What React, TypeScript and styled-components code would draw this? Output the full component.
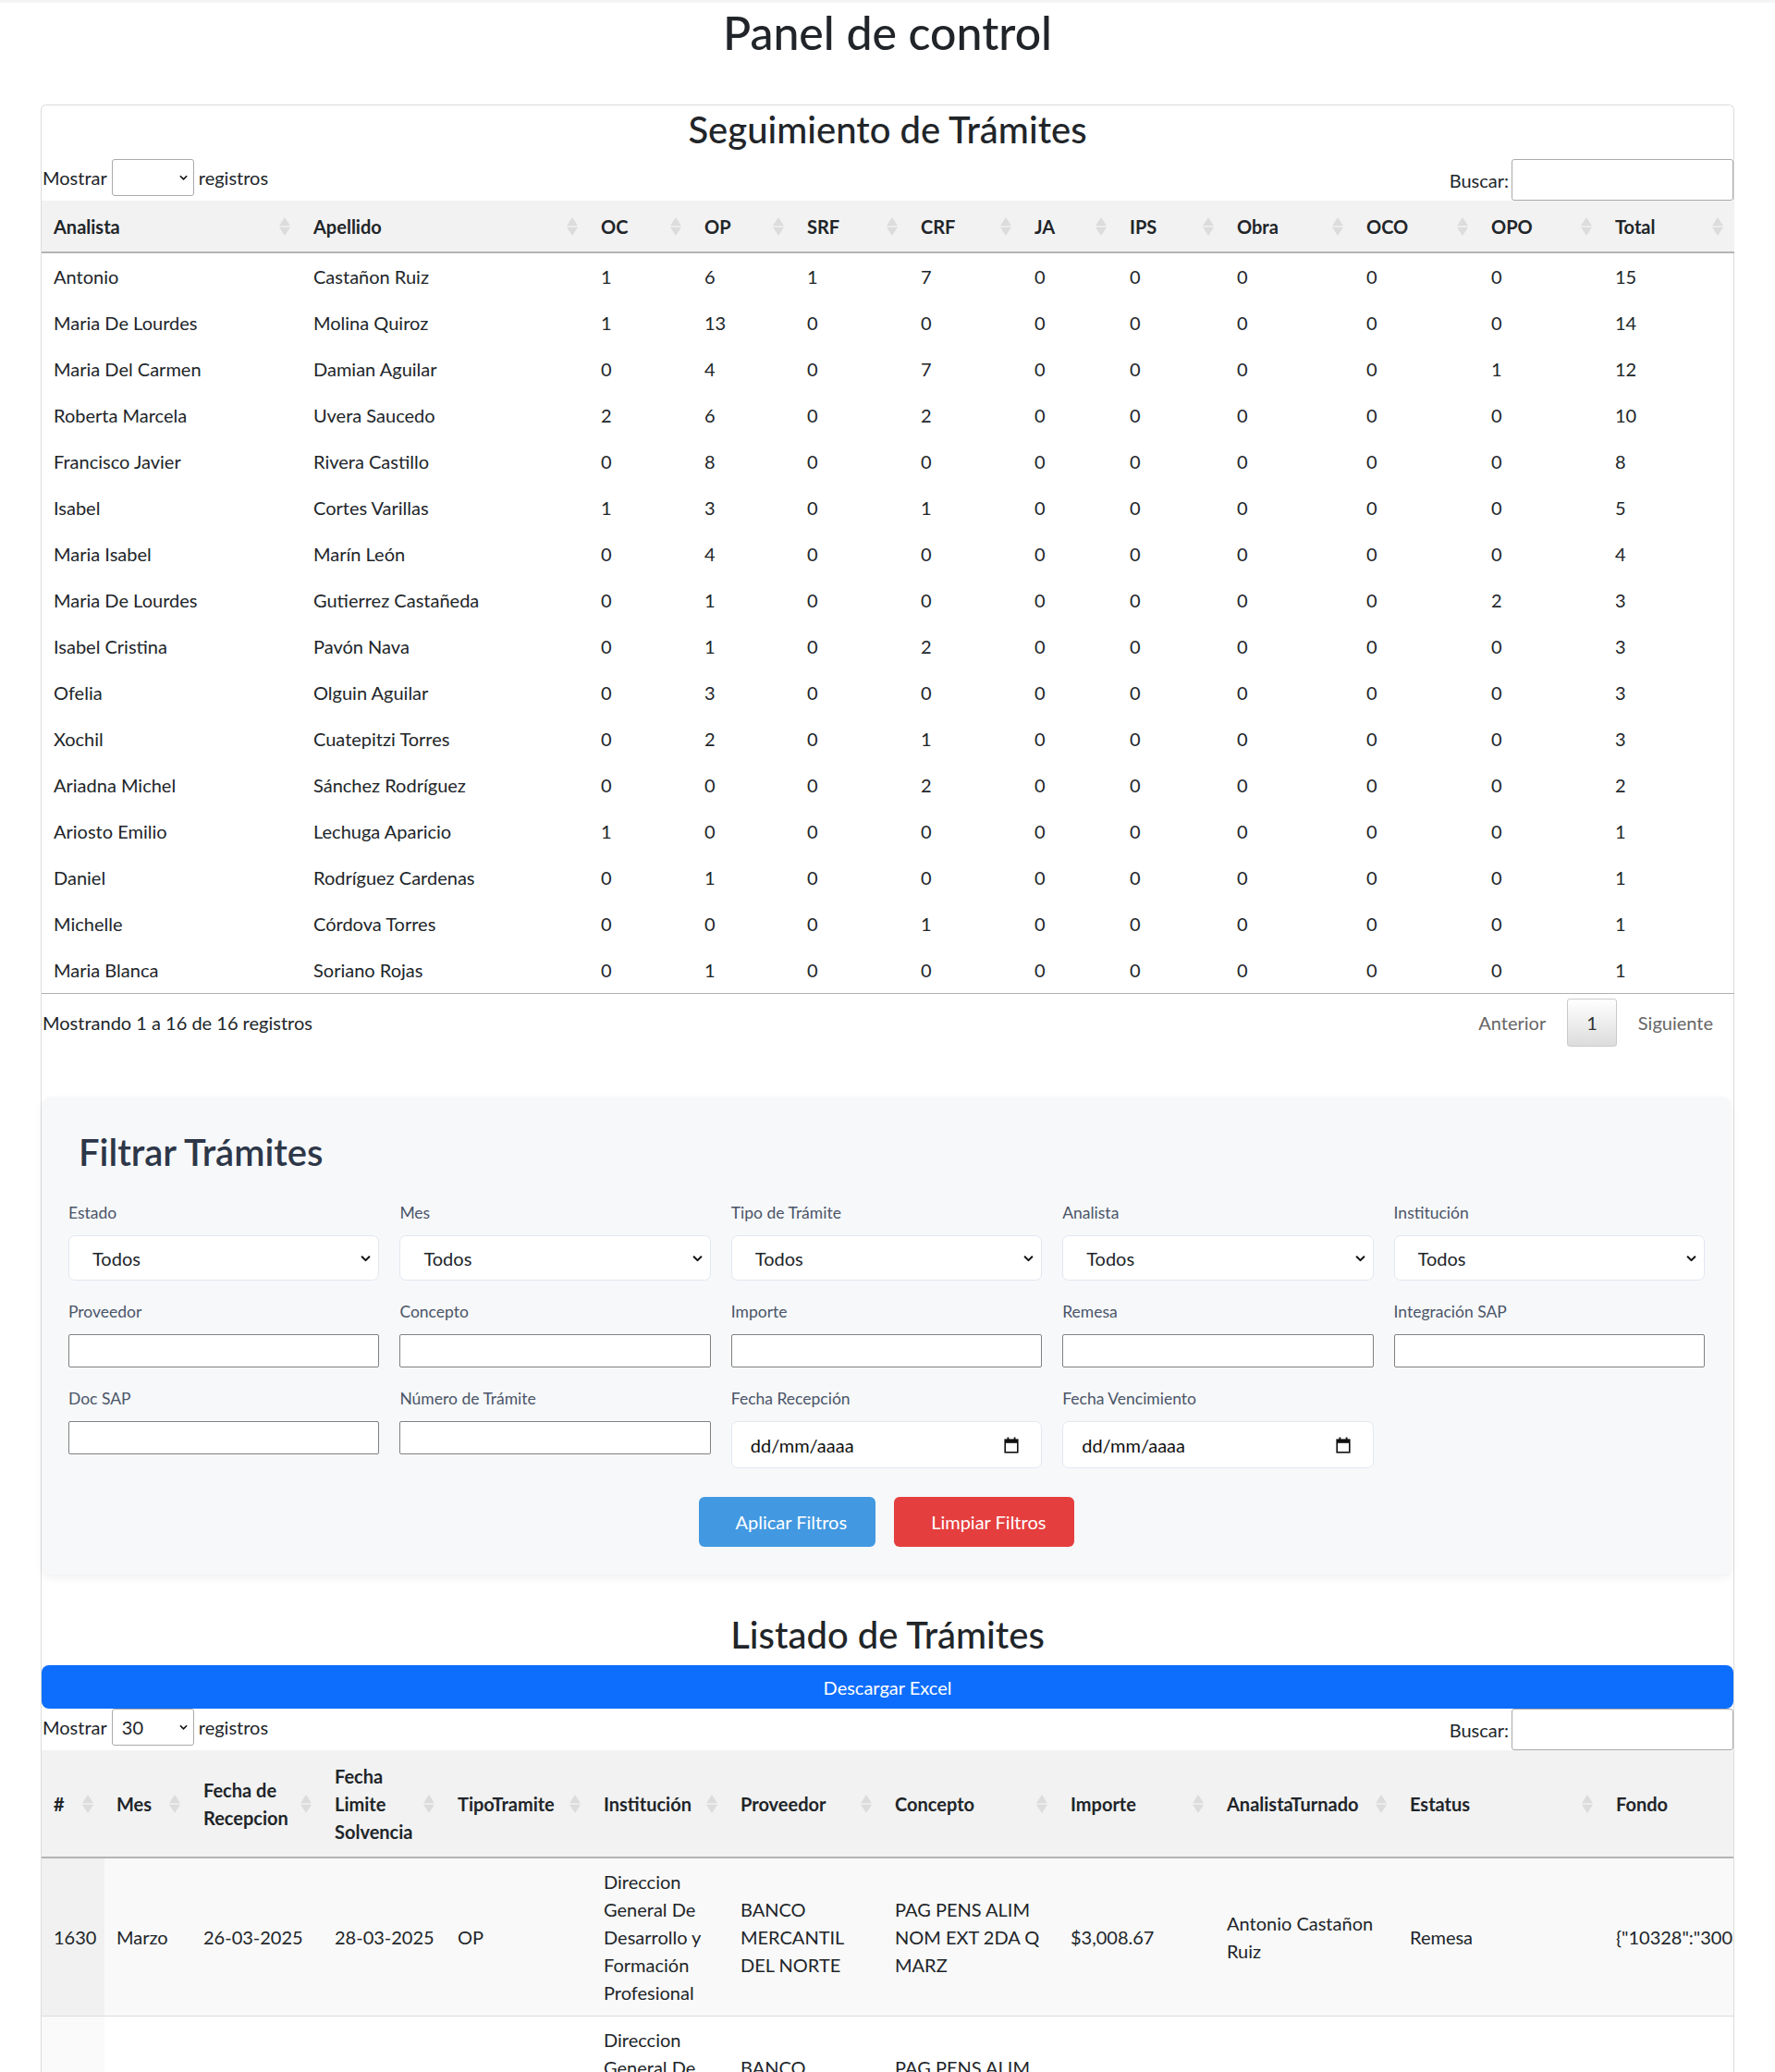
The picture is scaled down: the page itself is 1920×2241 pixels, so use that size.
import React from "react";
import styled, { createGlobalStyle } from "styled-components";

const GlobalStyle = createGlobalStyle`
  html, body { margin: 0; padding: 0; background: #ffffff; }
  body {
    font-family: Lato, "Open Sans", "Noto Sans", sans-serif;
    font-size: 20px;
    line-height: 1.5;
    color: #212529;
  }
  * { box-sizing: border-box; }
`;

const TopStrip = styled.div`
  height: 3px;
  background: #f3f4f6;
`;

const PageTitle = styled.h1`
  margin: 2px 0 48px;
  font-size: 50px;
  line-height: 60px;
  font-weight: 500;
  text-align: center;
`;

const Page = styled.div`
  padding: 0 44px;
`;

const Card = styled.div`
  border: 1px solid #dcdcdc;
  border-radius: 6px;
  border-bottom: none;
  background: #fff;
`;

const SectionTitle = styled.h2<{ $top: number; $bottom: number }>`
  margin: ${(p) => p.$top}px 0 ${(p) => p.$bottom}px;
  font-size: 40px;
  line-height: 48px;
  font-weight: 500;
  text-align: center;
  color: #212529;
`;

const DtTop = styled.div`
  display: flex;
  justify-content: space-between;
  align-items: flex-start;
  height: 45px;
`;

const LengthLabel = styled.label`
  display: flex;
  align-items: center;
  height: 40px;
  padding-left: 1px;
`;

const SelectWrap = styled.span`
  position: relative;
  display: inline-flex;
`;

const LengthSelect = styled.select`
  appearance: none;
  width: 89px;
  height: 40px;
  margin: 0 5px;
  padding: 0 0 0 10px;
  border: 1px solid #aaaaaa;
  border-radius: 3px;
  background: #fff;
  font: inherit;
  color: #212529;
`;

const Chevron = styled.svg<{ $right: number }>`
  position: absolute;
  right: ${(p) => p.$right}px;
  top: 50%;
  transform: translateY(-50%);
  pointer-events: none;
`;

const SearchLabel = styled.label`
  display: flex;
  align-items: center;
  height: 45px;
`;

const SearchInput = styled.input`
  width: 240px;
  height: 45px;
  margin-left: 3px;
  border: 1px solid #aaaaaa;
  border-radius: 3px;
  background: #fff;
  font: inherit;
`;

const DataTable = styled.table`
  width: 100%;
  border-collapse: collapse;
  table-layout: fixed;
  border-bottom: 1px solid #b0b0b0;
`;

const WideTable = styled(DataTable)`
  width: 1950px;
`;

const HeadCell = styled.th`
  background: #f2f2f2;
  padding: 12.5px 12px 12.5px 13px;
  border-bottom: 2px solid #b4b4b4;
  font-weight: 700;
  text-align: left;
  vertical-align: middle;
  white-space: nowrap;
  line-height: 30px;
`;

const HeadInner = styled.div`
  display: flex;
  align-items: center;
  justify-content: space-between;
  gap: 4px;
`;

const Cell = styled.td<{ $bg?: string; $line?: boolean; $nowrap?: boolean }>`
  padding: 10px 13px;
  line-height: 30px;
  vertical-align: middle;
  white-space: ${(p) => (p.$nowrap ? "nowrap" : "normal")};
  overflow: hidden;
  background: ${(p) => p.$bg || "transparent"};
  border-top: ${(p) => (p.$line ? "1px solid #dddddd" : "none")};
`;

const DtBottom = styled.div`
  display: flex;
  justify-content: space-between;
  align-items: flex-start;
  padding-top: 5px;
`;

const Info = styled.div`
  padding: 11px 0 0 1px;
  line-height: 30px;
`;

const Paginate = styled.div`
  display: flex;
  align-items: center;
  padding-right: 1px;
`;

const PageButton = styled.span<{ $current?: boolean }>`
  margin-left: 2px;
  padding: 10px 20px;
  line-height: 30px;
  border: 1px solid ${(p) => (p.$current ? "#cacaca" : "transparent")};
  border-radius: 3px;
  color: ${(p) => (p.$current ? "#333" : "#666")};
  background: ${(p) =>
    p.$current ? "linear-gradient(to bottom, #ffffff 0%, #dcdcdc 100%)" : "transparent"};
`;

const FilterPanel = styled.div`
  margin: 54px 2px 0 0;
  padding: 36px 29px 30px 29px;
  background: #f7f8fa;
  border-radius: 10px;
  box-shadow: 0 4px 10px rgba(0, 0, 0, 0.06);
`;

const FilterTitle = styled.h2`
  margin: 0 0 29px 11px;
  font-size: 40px;
  line-height: 48px;
  font-weight: 600;
  color: #2d3748;
`;

const FilterGrid = styled.div`
  display: grid;
  grid-template-columns: repeat(5, 1fr);
  column-gap: 22px;
  row-gap: 21px;
  align-items: start;
`;

const Field = styled.div`
  display: flex;
  flex-direction: column;
`;

const FieldLabel = styled.label`
  font-size: 17.5px;
  line-height: 26px;
  margin-bottom: 11px;
  color: #4a5568;
`;

const FilterSelect = styled.select`
  appearance: none;
  width: 100%;
  height: 49px;
  padding: 0 25px;
  border: 1px solid #e2e8f0;
  border-radius: 7px;
  background: #fff;
  font: inherit;
  color: #212529;
`;

const TextInput = styled.input`
  width: 100%;
  height: 36px;
  border: 1px solid #808080;
  border-radius: 2px;
  background: #fff;
  font: inherit;
`;

const DateBox = styled.div`
  display: flex;
  align-items: center;
  justify-content: space-between;
  height: 51px;
  padding: 0 24px 0 20px;
  border: 1px solid #e2e8f0;
  border-radius: 7px;
  background: #fff;
  color: #111;
`;

const ButtonRow = styled.div`
  display: flex;
  justify-content: center;
  gap: 20px;
  margin-top: 31px;
`;

const ActionButton = styled.button<{ $color: string }>`
  height: 54px;
  padding: 0 31px 0 40px;
  border: none;
  border-radius: 6px;
  background: ${(p) => p.$color};
  color: #fff;
  font: inherit;
`;

const ExcelBar = styled.button`
  display: block;
  width: 100%;
  height: 47px;
  border: none;
  border-radius: 8px;
  background: #0d6efd;
  color: #fff;
  font: inherit;
`;

const TableScroll = styled.div`
  overflow-x: auto;
`;

const SortIcon = () => (
  <svg width="12" height="20" viewBox="0 0 12 20" style={{ flex: "none" }}>
    <polygon points="6,0 12,9.3 0,9.3" fill="#dcdcdc" />
    <polygon points="0,10.7 12,10.7 6,20" fill="#dcdcdc" />
  </svg>
);

const ChevronIcon = ({ right, w, h }: { right: number; w: number; h: number }) => (
  <Chevron $right={right} width={w} height={h} viewBox="0 0 10 6">
    <path d="M1 1 L5 5 L9 1" fill="none" stroke="#111" strokeWidth="1.8" />
  </Chevron>
);

const CalendarIcon = () => (
  <svg width="16" height="18" viewBox="0 0 16 18">
    <rect x="1.2" y="3.2" width="13.6" height="13.6" fill="none" stroke="#111" strokeWidth="1.6" />
    <rect x="1.2" y="3.2" width="13.6" height="3.6" fill="#111" />
    <rect x="3.5" y="0.5" width="1.8" height="3" fill="#111" />
    <rect x="10.7" y="0.5" width="1.8" height="3" fill="#111" />
  </svg>
);

const t1Cols = [281, 311, 112, 111, 123, 123, 103, 116, 140, 135, 134, 142];
const t1Head = ["Analista", "Apellido", "OC", "OP", "SRF", "CRF", "JA", "IPS", "Obra", "OCO", "OPO", "Total"];
const t1Rows: (string | number)[][] = [
  ["Antonio", "Castañon Ruiz", 1, 6, 1, 7, 0, 0, 0, 0, 0, 15],
  ["Maria De Lourdes", "Molina Quiroz", 1, 13, 0, 0, 0, 0, 0, 0, 0, 14],
  ["Maria Del Carmen", "Damian Aguilar", 0, 4, 0, 7, 0, 0, 0, 0, 1, 12],
  ["Roberta Marcela", "Uvera Saucedo", 2, 6, 0, 2, 0, 0, 0, 0, 0, 10],
  ["Francisco Javier", "Rivera Castillo", 0, 8, 0, 0, 0, 0, 0, 0, 0, 8],
  ["Isabel", "Cortes Varillas", 1, 3, 0, 1, 0, 0, 0, 0, 0, 5],
  ["Maria Isabel", "Marín León", 0, 4, 0, 0, 0, 0, 0, 0, 0, 4],
  ["Maria De Lourdes", "Gutierrez Castañeda", 0, 1, 0, 0, 0, 0, 0, 0, 2, 3],
  ["Isabel Cristina", "Pavón Nava", 0, 1, 0, 2, 0, 0, 0, 0, 0, 3],
  ["Ofelia", "Olguin Aguilar", 0, 3, 0, 0, 0, 0, 0, 0, 0, 3],
  ["Xochil", "Cuatepitzi Torres", 0, 2, 0, 1, 0, 0, 0, 0, 0, 3],
  ["Ariadna Michel", "Sánchez Rodríguez", 0, 0, 0, 2, 0, 0, 0, 0, 0, 2],
  ["Ariosto Emilio", "Lechuga Aparicio", 1, 0, 0, 0, 0, 0, 0, 0, 0, 1],
  ["Daniel", "Rodríguez Cardenas", 0, 1, 0, 0, 0, 0, 0, 0, 0, 1],
  ["Michelle", "Córdova Torres", 0, 0, 0, 1, 0, 0, 0, 0, 0, 1],
  ["Maria Blanca", "Soriano Rojas", 0, 1, 0, 0, 0, 0, 0, 0, 0, 1],
];

const t2Cols = [68, 94, 142, 133, 158, 148, 167, 190, 169, 198, 223, 260];
const t2Nowrap = [true, true, true, true, true, false, false, false, true, false, true, true];
const t2Head: React.ReactNode[] = [
  "#",
  "Mes",
  <>Fecha de<br />Recepcion</>,
  <>Fecha<br />Limite<br />Solvencia</>,
  "TipoTramite",
  "Institución",
  "Proveedor",
  "Concepto",
  "Importe",
  "AnalistaTurnado",
  "Estatus",
  "Fondo",
];
const t2Rows: string[][] = [
  ["1630", "Marzo", "26-03-2025", "28-03-2025", "OP", "Direccion General De Desarrollo y Formación Profesional", "BANCO MERCANTIL DEL NORTE", "PAG PENS ALIM NOM EXT 2DA Q MARZ", "$3,008.67", "Antonio Castañon Ruiz", "Remesa", "{\"10328\":\"3008.67\"}"],
  ["1629", "Marzo", "26-03-2025", "28-03-2025", "OP", "Direccion General De Desarrollo y Formación Profesional", "BANCO MERCANTIL DEL NORTE", "PAG PENS ALIM NOM EXT 1RA Q MARZ", "$3,008.67", "Antonio Castañon Ruiz", "Remesa", "{\"10328\":\"3008.67\"}"],
  ["1628", "Marzo", "25-03-2025", "27-03-2025", "OP", "Direccion General De Desarrollo y Formación Profesional", "BANCO MERCANTIL DEL NORTE", "PAG PENS ALIM NOM EXT 2DA Q FEB", "$2,950.12", "Antonio Castañon Ruiz", "Remesa", "{\"10328\":\"2950.12\"}"],
];

const selectFields = ["Estado", "Mes", "Tipo de Trámite", "Analista", "Institución"];
const textFields = ["Proveedor", "Concepto", "Importe", "Remesa", "Integración SAP"];

export default function App() {
  return (
    <>
      <GlobalStyle />
      <TopStrip />
      <PageTitle>Panel de control</PageTitle>
      <Page>
        <Card>
          <SectionTitle $top={2} $bottom={8}>Seguimiento de Trámites</SectionTitle>
          <DtTop>
            <LengthLabel>
              Mostrar
              <SelectWrap>
                <LengthSelect defaultValue="">
                  <option value=""></option>
                </LengthSelect>
                <ChevronIcon right={12} w={9} h={6} />
              </SelectWrap>
              registros
            </LengthLabel>
            <SearchLabel>
              Buscar:
              <SearchInput type="text" />
            </SearchLabel>
          </DtTop>
          <DataTable>
            <colgroup>
              {t1Cols.map((w, i) => (
                <col key={i} style={{ width: w }} />
              ))}
            </colgroup>
            <thead>
              <tr>
                {t1Head.map((h) => (
                  <HeadCell key={h}>
                    <HeadInner>
                      <span>{h}</span>
                      <SortIcon />
                    </HeadInner>
                  </HeadCell>
                ))}
              </tr>
            </thead>
            <tbody>
              {t1Rows.map((r, i) => (
                <tr key={i}>
                  {r.map((c, j) => (
                    <Cell key={j} $nowrap>{c}</Cell>
                  ))}
                </tr>
              ))}
            </tbody>
          </DataTable>
          <DtBottom>
            <Info>Mostrando 1 a 16 de 16 registros</Info>
            <Paginate>
              <PageButton>Anterior</PageButton>
              <PageButton $current>1</PageButton>
              <PageButton>Siguiente</PageButton>
            </Paginate>
          </DtBottom>

          <FilterPanel>
            <FilterTitle>Filtrar Trámites</FilterTitle>
            <FilterGrid>
              {selectFields.map((f) => (
                <Field key={f}>
                  <FieldLabel>{f}</FieldLabel>
                  <SelectWrap>
                    <FilterSelect defaultValue="Todos">
                      <option>Todos</option>
                    </FilterSelect>
                    <ChevronIcon right={9} w={11} h={7} />
                  </SelectWrap>
                </Field>
              ))}
              {textFields.map((f) => (
                <Field key={f}>
                  <FieldLabel>{f}</FieldLabel>
                  <TextInput type="text" />
                </Field>
              ))}
              <Field>
                <FieldLabel>Doc SAP</FieldLabel>
                <TextInput type="text" />
              </Field>
              <Field>
                <FieldLabel>Número de Trámite</FieldLabel>
                <TextInput type="text" />
              </Field>
              <Field>
                <FieldLabel>Fecha Recepción</FieldLabel>
                <DateBox>
                  <span>dd/mm/aaaa</span>
                  <CalendarIcon />
                </DateBox>
              </Field>
              <Field>
                <FieldLabel>Fecha Vencimiento</FieldLabel>
                <DateBox>
                  <span>dd/mm/aaaa</span>
                  <CalendarIcon />
                </DateBox>
              </Field>
            </FilterGrid>
            <ButtonRow>
              <ActionButton $color="#4299e1">Aplicar Filtros</ActionButton>
              <ActionButton $color="#e53e3e">Limpiar Filtros</ActionButton>
            </ButtonRow>
          </FilterPanel>

          <SectionTitle $top={41} $bottom={9}>Listado de Trámites</SectionTitle>
          <ExcelBar>Descargar Excel</ExcelBar>
          <DtTop>
            <LengthLabel>
              Mostrar
              <SelectWrap>
                <LengthSelect defaultValue="30">
                  <option>10</option>
                  <option>30</option>
                  <option>50</option>
                </LengthSelect>
                <ChevronIcon right={12} w={9} h={6} />
              </SelectWrap>
              registros
            </LengthLabel>
            <SearchLabel>
              Buscar:
              <SearchInput type="text" />
            </SearchLabel>
          </DtTop>
          <TableScroll>
            <WideTable>
              <colgroup>
                {t2Cols.map((w, i) => (
                  <col key={i} style={{ width: w }} />
                ))}
              </colgroup>
              <thead>
                <tr>
                  {t2Head.map((h, i) => (
                    <HeadCell key={i}>
                      <HeadInner>
                        <span>{h}</span>
                        <SortIcon />
                      </HeadInner>
                    </HeadCell>
                  ))}
                </tr>
              </thead>
              <tbody>
                {t2Rows.map((r, i) => (
                  <tr key={i}>
                    {r.map((c, j) => (
                      <Cell
                        key={j}
                        $line={i > 0}
                        $nowrap={t2Nowrap[j]}
                        $bg={
                          j === 0
                            ? i % 2 === 0
                              ? "#f1f1f1"
                              : "#fafafa"
                            : i % 2 === 0
                            ? "#f9f9f9"
                            : "#ffffff"
                        }
                      >
                        {c}
                      </Cell>
                    ))}
                  </tr>
                ))}
              </tbody>
            </WideTable>
          </TableScroll>
        </Card>
      </Page>
    </>
  );
}
